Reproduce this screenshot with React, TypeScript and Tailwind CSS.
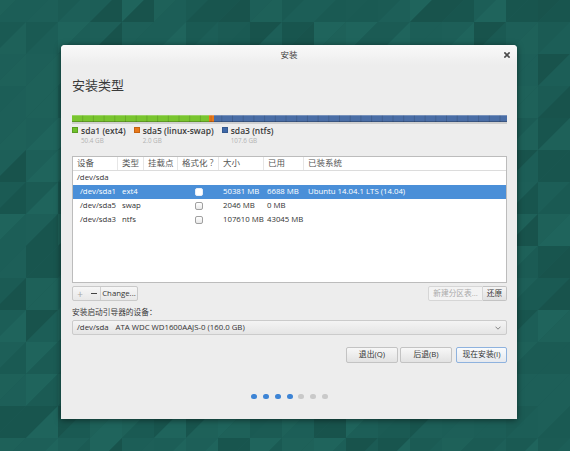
import React from "react";

function hash(n: number) {
  let h = Math.imul(n ^ 0x5bd1e995, 2654435761);
  h ^= h >>> 13;
  h = Math.imul(h, 0x85ebca6b);
  h ^= h >>> 16;
  return h >>> 0;
}

const shades = ["#1a5a53", "#1c5e57", "#1e6159", "#18554e", "#1f645c", "#1b5b54", "#1d5f58", "#18534c"];

function Background() {
  const tris: React.ReactElement[] = [];
  const s = 32;
  for (let r = 0; r < 16; r++) {
    for (let c = 0; c < 20; c++) {
      const x = c * s - 6;
      const y = r * s - 10;
      const a = shades[hash(r * 131 + c * 7 + 1) % shades.length];
      const b = shades[hash(r * 53 + c * 211 + 9) % shades.length];
      tris.push(<polygon key={`a${r}-${c}`} points={`${x},${y} ${x + s},${y} ${x},${y + s}`} fill={a} />);
      tris.push(<polygon key={`b${r}-${c}`} points={`${x + s},${y} ${x + s},${y + s} ${x},${y + s}`} fill={b} />);
    }
  }
  return (
    <svg className="absolute inset-0" width={570} height={451} viewBox="0 0 570 451">
      {tris}
    </svg>
  );
}

function PartitionBar() {
  const ticks: React.ReactElement[] = [];
  for (let x = 10.7; x < 435; x += 10.7) {
    ticks.push(<line key={x} x1={x} y1={0} x2={x} y2={7} stroke="rgba(0,0,0,0.13)" strokeWidth={1} />);
  }
  return (
    <svg width={435} height={9} viewBox="0 0 435 9" className="block">
      <rect x={0} y={7} width={435} height={2} fill="#cfcfcf" />
      <rect x={0} y={0} width={137} height={7} fill="#79c52f" />
      <rect x={137} y={0} width={5} height={7} fill="#e7781a" />
      <rect x={142} y={0} width={293} height={7} fill="#4a6ea6" />
      {ticks}
      <rect x={0} y={0} width={435} height={1} fill="rgba(255,255,255,0.25)" />
      <rect x={0} y={6} width={435} height={1} fill="rgba(0,0,0,0.22)" />
    </svg>
  );
}

function Legend({ color, border, label, size }: { color: string; border: string; label: string; size: string }) {
  return (
    <div className="flex items-start gap-[3px]">
      <div className={`mt-[1px] w-[6px] h-[6px] ${color} ${border} border`} />
      <div className="flex flex-col">
        <span className="text-[8.5px] leading-[10px] font-semibold text-[#3a3a3a] whitespace-nowrap">{label}</span>
        <span className="mt-[1px] text-[6.3px] leading-[8px] text-[#b2b2b2] whitespace-nowrap">{size}</span>
      </div>
    </div>
  );
}

function Check({ selected }: { selected?: boolean }) {
  return (
    <div className="flex justify-center">
      <div
        className={`w-[8px] h-[8px] rounded-[2px] border ${
          selected ? "border-[#e8eef8] bg-white" : "border-[#a0a0a0] bg-gradient-to-b from-white to-[#e9e9e9]"
        }`}
      />
    </div>
  );
}

const cols = "grid grid-cols-[45px_26px_34px_41px_45px_40px_1fr]";

function Row({ dev, type, size, used, sys, selected }: { dev: string; type: string; size: string; used: string; sys?: string; selected?: boolean }) {
  return (
    <div className={`${cols} h-[14px] items-center text-[7.8px] whitespace-nowrap ${selected ? "bg-[#4a8fd8] text-white" : "text-[#333]"}`}>
      <span className="pl-[7px]">{dev}</span>
      <span className="pl-[4px]">{type}</span>
      <span />
      <Check selected={selected} />
      <span className="pl-[4px]">{size}</span>
      <span className="pl-[3px]">{used}</span>
      <span className="pl-[4px]">{sys ?? ""}</span>
    </div>
  );
}

function Btn({ children, w, primary }: { children: React.ReactNode; w: string; primary?: boolean }) {
  return (
    <div
      className={`${w} h-[16px] flex items-center justify-center rounded-[2px] border text-[7.8px] text-[#333] whitespace-nowrap ${
        primary
          ? "border-[#8eb2de] bg-gradient-to-b from-[#f9fbfd] to-[#e6e9ee]"
          : "border-[#c3c3c3] bg-gradient-to-b from-[#f7f7f7] to-[#e2e2e2]"
      }`}
    >
      {children}
    </div>
  );
}

export default function App() {
  const headers = ["设备", "类型", "挂载点", "格式化 ?", "大小", "已用", "已装系统"];
  return (
    <div className="relative w-[570px] h-[451px] overflow-hidden bg-[#1c5d56] font-['Open_Sans','Noto_Sans_CJK_SC',sans-serif]">
      <Background />
      <div className="absolute left-[61px] top-[45px] w-[456px] h-[374px] bg-[#ededed] rounded-t-[4px] shadow-[0_1px_6px_rgba(0,0,0,0.5)] flex flex-col">
        {/* title bar */}
        <div className="relative h-[20px] flex items-center justify-center rounded-t-[4px] bg-gradient-to-b from-[#f9f9f9] to-[#ededed]">
          <span className="text-[8.5px] text-[#3c3c3c]">安装</span>
          <svg className="absolute right-[7px] top-[7px]" width={6} height={6} viewBox="0 0 6 6">
            <path d="M0.9 0.9 L5.1 5.1 M5.1 0.9 L0.9 5.1" stroke="#4a4a4a" strokeWidth={1.6} strokeLinecap="square" />
          </svg>
        </div>
        <div className="flex flex-col pl-[11px] pr-[10px]">
          <div className="mt-[12px] h-[16px] text-[13px] leading-[16px] text-[#3a3a3a]">安装类型</div>
          <div className="mt-[22px]">
            <PartitionBar />
          </div>
          <div className="mt-[2px] flex gap-[8px]">
            <Legend color="bg-[#6fc12a]" border="border-[#5a9e22]" label="sda1 (ext4)" size="50.4 GB" />
            <Legend color="bg-[#e8781a]" border="border-[#c66310]" label="sda5 (linux-swap)" size="2.0 GB" />
            <Legend color="bg-[#3f68a8]" border="border-[#34598f]" label="sda3 (ntfs)" size="107.6 GB" />
          </div>
          {/* table */}
          <div className="mt-[11px] h-[127px] border border-[#bcbcbc] bg-white flex flex-col">
            <div className={`${cols} h-[14px] items-center border-b border-[#dcdcdc] text-[8.5px] text-[#555] whitespace-nowrap`}>
              {headers.map((h, i) => (
                <span key={h} className={`h-full flex items-center pl-[4px] ${i < headers.length - 1 ? "border-r border-[#e6e6e6]" : ""}`}>
                  {h}
                </span>
              ))}
            </div>
            <div className="h-[14px] flex items-center pl-[4px] text-[7.8px] text-[#333]">/dev/sda</div>
            <Row dev="/dev/sda1" type="ext4" size="50381 MB" used="6688 MB" sys="Ubuntu 14.04.1 LTS (14.04)" selected />
            <Row dev="/dev/sda5" type="swap" size="2046 MB" used="0 MB" />
            <Row dev="/dev/sda3" type="ntfs" size="107610 MB" used="43045 MB" />
          </div>
          {/* tool row */}
          <div className="mt-[3px] h-[15px] flex justify-between">
            <div className="flex h-[15px] w-[66px] rounded-[2px] border border-[#c9c9c9] bg-gradient-to-b from-[#f6f6f6] to-[#e8e8e8] text-[#444]">
              <div className="w-[14px] flex items-center justify-center text-[10px] leading-none text-[#a8a8a8]">+</div>
              <div className="w-[13px] flex items-center justify-center">
                <div className="w-[6px] h-[1.5px] bg-[#444]" />
              </div>
              <div className="flex-1 flex items-center justify-center border-l border-[#d0d0d0] text-[7.8px] text-[#333]">Change...</div>
            </div>
            <div className="flex h-[15px]">
              <div className="w-[55px] flex items-center justify-center rounded-l-[2px] border border-[#d6d6d6] bg-[#f3f3f3] text-[7.7px] text-[#aaaaaa] whitespace-nowrap">
                新建分区表...
              </div>
              <div className="w-[24px] flex items-center justify-center rounded-r-[2px] border border-l-0 border-[#c3c3c3] bg-gradient-to-b from-[#f5f5f5] to-[#e1e1e1] text-[7.7px] text-[#333]">
                还原
              </div>
            </div>
          </div>
          <div className="mt-[6px] h-[10px] leading-[10px] text-[7.7px] text-[#3a3a3a]">安装启动引导器的设备：</div>
          <div className="mt-[3px] h-[15px] flex items-center justify-between rounded-[2px] border border-[#cbcbcb] bg-gradient-to-b from-[#f4f4f4] to-[#e5e5e5] pl-[4px] pr-[5px] text-[7.8px] text-[#333] whitespace-nowrap">
            <div className="flex">
              <span>/dev/sda</span>
              <span className="ml-[7px]">ATA WDC WD1600AAJS-0 (160.0 GB)</span>
            </div>
            <svg width={6} height={4} viewBox="0 0 6 4">
              <path d="M0.5 0.7 L3 3.2 L5.5 0.7" stroke="#777" strokeWidth={0.9} fill="none" />
            </svg>
          </div>
          <div className="mt-[12px] flex justify-end">
            <Btn w="w-[52px]">退出(Q)</Btn>
            <div className="w-[2px]" />
            <Btn w="w-[52px]">后退(B)</Btn>
            <div className="w-[4px]" />
            <Btn w="w-[51px]" primary>
              现在安装(I)
            </Btn>
          </div>
          <div className="mt-[31px] flex justify-center gap-[5.7px]">
            {[0, 1, 2, 3, 4, 5, 6].map((i) => (
              <div key={i} className={`w-[6px] h-[5px] rounded-full ${i < 4 ? "bg-[#3d84d5]" : "bg-[#c9c9c9]"}`} />
            ))}
          </div>
        </div>
      </div>
    </div>
  );
}
